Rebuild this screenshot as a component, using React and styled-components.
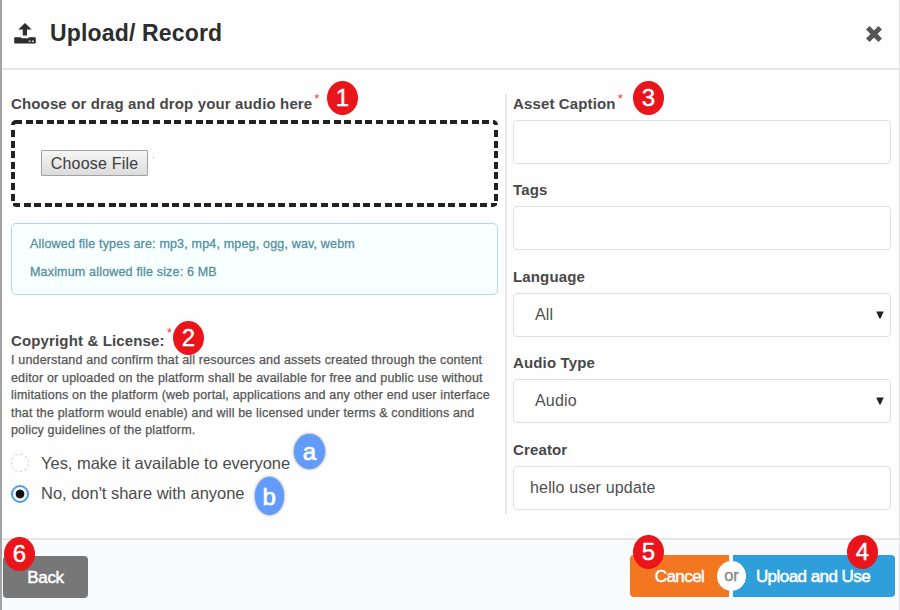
import React from "react";
import styled, { createGlobalStyle } from "styled-components";

const GlobalStyle = createGlobalStyle`
  *, *::before, *::after { box-sizing: border-box; }
  html, body { margin: 0; padding: 0; background: #fff; }
  body { overflow: hidden; font-family: "Liberation Sans", Arial, sans-serif; color: #4c4c4c; }
`;

const Modal = styled.div`
  width: 900px;
  height: 610px;
  display: flex;
  flex-direction: column;
  background: #fefefe;
  border-left: 2px solid #a3a3a3;
  border-right: 1px solid #e2e2e2;
`;

const Header = styled.header`
  height: 70px;
  flex: none;
  display: flex;
  align-items: center;
  padding: 0 17px 2px 12px;
  border-bottom: 2px solid #e6e6e6;
`;

const Title = styled.h1`
  margin: 0 auto 0 14px;
  font-size: 23px;
  line-height: 28px;
  letter-spacing: 0.17px;
  color: #2d2d2d;
`;

const IconButton = styled.button`
  display: flex;
  padding: 0;
  margin-top: 1px;
  border: 0;
  background: none;
  color: #555;
`;

const Content = styled.main`
  height: 468px;
  flex: none;
  display: grid;
  grid-template-columns: 487px 386px;
  column-gap: 7px;
  padding: 24px 0 0 9px;
`;

const Column = styled.section`
  display: flex;
  flex-direction: column;
  padding-top: 1px;
`;

const FieldsColumn = styled(Column)`
  height: 420px;
  border-left: 2px solid #e9e9e9;
  padding-left: 6px;
`;

const Label = styled.label`
  position: relative;
  flex: none;
  align-self: flex-start;
  font-size: 15px;
  font-weight: bold;
  line-height: 18px;
  letter-spacing: 0.14px;
  white-space: nowrap;
  color: #484848;
`;

const Required = styled.span`
  position: absolute;
  left: calc(100% + 2px);
  top: ${(p) => p.$top || "-4px"};
  font-size: 13px;
  line-height: 16px;
  font-weight: normal;
  color: #e8434a;
`;

const Badge = styled.span`
  position: absolute;
  left: ${(p) => p.$x};
  top: ${(p) => p.$y};
  z-index: 1;
  width: 31px;
  height: 34px;
  border-radius: 50%;
  display: flex;
  align-items: center;
  justify-content: center;
  background: #ea141b;
  color: #fff;
  font-size: 24px;
  font-weight: normal;
  line-height: 1;
  letter-spacing: 0;
  -webkit-text-stroke: 0.4px #fff;
`;

const NoteBadge = styled(Badge)`
  width: ${(p) => p.$w};
  height: ${(p) => p.$h};
  padding-top: 1px;
  background: #619bfb;
  box-shadow: 0 0 3px rgba(60, 60, 60, 0.65);
  -webkit-text-stroke: 0.7px #fff;
`;

const dashX = "repeating-linear-gradient(90deg, #222 0 7px, transparent 7px 10.62px)";
const dashY = "repeating-linear-gradient(180deg, #222 0 7px, transparent 7px 10.62px)";

const DropZone = styled.div`
  height: 87px;
  flex: none;
  display: flex;
  align-items: center;
  margin-top: 7px;
  padding-left: 30px;
  border-radius: 5px;
  background:
    ${dashX} 4px 0 / 479px 4px no-repeat,
    ${dashX} 1.5px 100% / 484px 4px no-repeat,
    ${dashY} 0 10px / 4px 71px no-repeat,
    ${dashY} 100% 9.5px / 4px 71px no-repeat,
    linear-gradient(#222, #222) 0 0 / 4px 5px no-repeat,
    linear-gradient(#222, #222) 100% 0 / 4px 5px no-repeat;
`;

const FileButton = styled.button`
  width: 107px;
  height: 26px;
  margin-top: -1px;
  padding: 0;
  border: 1px solid #a2a2a2;
  border-radius: 1px;
  background: linear-gradient(#f6f6f6, #dcdcdc);
  font: 16px/25px "Liberation Sans", Arial, sans-serif;
  letter-spacing: 0.2px;
  color: #3c3c3c;
`;

const Speck = styled.i`
  width: 1px;
  height: 1px;
  margin: -12px 0 0 5px;
  background: #aaa;
`;

const InfoBox = styled.div`
  height: 72px;
  flex: none;
  margin-top: 16px;
  padding: 6px 0 0 18px;
  border: 1px solid #abdde6;
  border-radius: 5px;
  background: #f7ffff;
  font-size: 12.5px;
  line-height: 28px;
  letter-spacing: 0.18px;
  color: #5590a1;
  -webkit-text-stroke: 0.3px #5590a1;
`;

const InfoLine = styled.p`
  margin: 0;
`;

const LicenseLabel = styled(Label)`
  margin-top: 37px;
`;

const Terms = styled.p`
  margin: 2px 0 0;
  font-size: 12.5px;
  line-height: 17.6px;
  letter-spacing: 0.17px;
  white-space: nowrap;
  color: #555;
  -webkit-text-stroke: 0.25px #555;
`;

const Option = styled.label`
  position: relative;
  height: 30.5px;
  display: flex;
  align-items: center;
  align-self: flex-start;
  gap: 12px;
  font-size: 16.5px;
  letter-spacing: -0.02px;
  white-space: nowrap;
`;

const Options = styled.div`
  display: flex;
  flex-direction: column;
  margin-top: 8px;
`;

const Radio = styled.span`
  width: 18px;
  height: 18px;
  border-radius: 50%;
  border: ${(p) => (p.$checked ? "2px solid #4a9bf5" : "1px dashed #cfcfcf")};
  background: ${(p) => (p.$checked ? "radial-gradient(circle, #111 4px, transparent 4.8px)" : "#fff")};
`;

const Field = styled.div`
  display: flex;
  flex-direction: column;
  height: 86.4px;
  flex: none;
`;

const Control = styled.div`
  height: 44px;
  margin-top: 7px;
  width: 378px;
  display: flex;
  align-items: center;
  justify-content: space-between;
  padding: 0 6px 0 ${(p) => (p.$select ? "21px" : "16px")};
  border: 1px solid #dfdfdf;
  border-radius: 4px;
  background: #fff;
  font-size: 16px;
  letter-spacing: 0.17px;
  color: #4f4f4f;
`;

const Footer = styled.footer`
  flex: 1;
  display: flex;
  align-items: flex-start;
  justify-content: space-between;
  padding: 15px 4px 0 1px;
  border-top: 2px solid #e6e6e6;
  background: #f9fafc;
`;

const Button = styled.button`
  position: relative;
  width: ${(p) => p.$w};
  height: 42px;
  padding: ${(p) => p.$pad || 0};
  border: 0;
  border-radius: ${(p) => p.$radius || "4px"};
  background: ${(p) => p.$bg};
  color: #fff;
  font: 17px/43px "Liberation Sans", Arial, sans-serif;
  letter-spacing: -0.55px;
  white-space: nowrap;
  -webkit-text-stroke: 0.5px #fff;
`;

const BackButton = styled(Button)`
  margin-top: 1px;
  letter-spacing: -0.3px;
`;

const ButtonGroup = styled.div`
  position: relative;
  display: flex;
  gap: 4px;
`;

const Or = styled.span`
  position: absolute;
  left: 87px;
  top: 6px;
  width: 29px;
  height: 30px;
  border-radius: 50%;
  background: #fff;
  text-align: center;
  font-size: 16.5px;
  line-height: 28px;
  color: #8a8a8a;
  -webkit-text-stroke: 0.4px #8a8a8a;
`;

const UploadIcon = () => (
  <svg width="22" height="21" viewBox="0 0 22 21" fill="#2d2d2d">
    <path d="M11 0 L17.6 6.6 H13 V12.6 H8.8 V6.6 H4.4 Z" />
    <path d="M1 14.2 H6.8 L7.6 15.2 H14.2 L15 14.2 H20.8 Q21.8 14.2 21.8 15.2 V19.6 Q21.8 20.6 20.8 20.6 H1 Q0.2 20.6 0.2 19.6 V15.2 Q0.2 14.2 1 14.2 Z" />
    <path d="M14.8 17.4h1.8v1.5h-1.8z M18 17.4h1.8v1.5h-1.8z" fill="#ddd" />
  </svg>
);

const CloseIcon = () => (
  <svg width="16" height="16" viewBox="0 0 16 16" stroke="#555" strokeWidth="5" strokeLinecap="butt" strokeLinejoin="round">
    <path d="M1.8 1.8 L14.2 14.2 M14.2 1.8 L1.8 14.2" />
  </svg>
);

const Arrow = () => (
  <svg width="8" height="8" viewBox="0 0 8 8" fill="#222">
    <path d="M0.3 0.4 H7.7 L4.6 7.6 H3.4 Z" />
  </svg>
);

const fields = [
  { label: "Asset Caption", required: true },
  { label: "Tags" },
  { label: "Language", value: "All", select: true },
  { label: "Audio Type", value: "Audio", select: true },
  { label: "Creator", value: "hello user update" },
];

export default function App() {
  return (
    <Modal>
      <GlobalStyle />
      <Header>
        <UploadIcon />
        <Title>Upload/ Record</Title>
        <IconButton aria-label="Close">
          <CloseIcon />
        </IconButton>
      </Header>
      <Content>
        <Column>
          <Label>
            Choose or drag and drop your audio here
            <Required>*</Required>
            <Badge $x="316px" $y="-14.5px">1</Badge>
          </Label>
          <DropZone>
            <FileButton>Choose File</FileButton>
            <Speck />
          </DropZone>
          <InfoBox>
            <InfoLine>Allowed file types are: mp3, mp4, mpeg, ogg, wav, webm</InfoLine>
            <InfoLine>Maximum allowed file size: 6 MB</InfoLine>
          </InfoBox>
          <LicenseLabel>
            Copyright &amp; License:
            <Required $top="-7px">*</Required>
            <Badge $x="162px" $y="-11px">2</Badge>
          </LicenseLabel>
          <Terms>
            I understand and confirm that all resources and assets created through the content<br />
            editor or uploaded on the platform shall be available for free and public use without<br />
            limitations on the platform (web portal, applications and any other end user interface<br />
            that the platform would enable) and will be licensed under terms &amp; conditions and<br />
            policy guidelines of the platform.
          </Terms>
          <Options>
            <Option>
              <Radio />
              Yes, make it available to everyone
              <NoteBadge $x="283px" $y="-14px" $w="31px" $h="35px">a</NoteBadge>
            </Option>
            <Option>
              <Radio $checked />
              No, don't share with anyone
              <NoteBadge $x="243.5px" $y="-1px" $w="29.5px" $h="38px">b</NoteBadge>
            </Option>
          </Options>
        </Column>
        <FieldsColumn>
          {fields.map((f) => (
            <Field key={f.label}>
              <Label>
                {f.label}
                {f.required && (
                  <>
                    <Required>*</Required>
                    <Badge $x="120px" $y="-14.5px">3</Badge>
                  </>
                )}
              </Label>
              <Control $select={f.select}>
                {f.value}
                {f.select && <Arrow />}
              </Control>
            </Field>
          ))}
        </FieldsColumn>
      </Content>
      <Footer>
        <BackButton $w="85px" $bg="#777">
          Back
          <Badge $x="1px" $y="-19.5px">6</Badge>
        </BackButton>
        <ButtonGroup>
          <Button $w="99px" $bg="#f37720" $radius="4px 0 0 4px">
            Cancel
            <Badge $x="3px" $y="-20px">5</Badge>
          </Button>
          <Button $w="162px" $bg="#2f9fdb" $radius="0 4px 4px 0" $pad="0 2px 0 0">
            Upload and Use
            <Badge $x="114px" $y="-20px">4</Badge>
          </Button>
          <Or>or</Or>
        </ButtonGroup>
      </Footer>
    </Modal>
  );
}
